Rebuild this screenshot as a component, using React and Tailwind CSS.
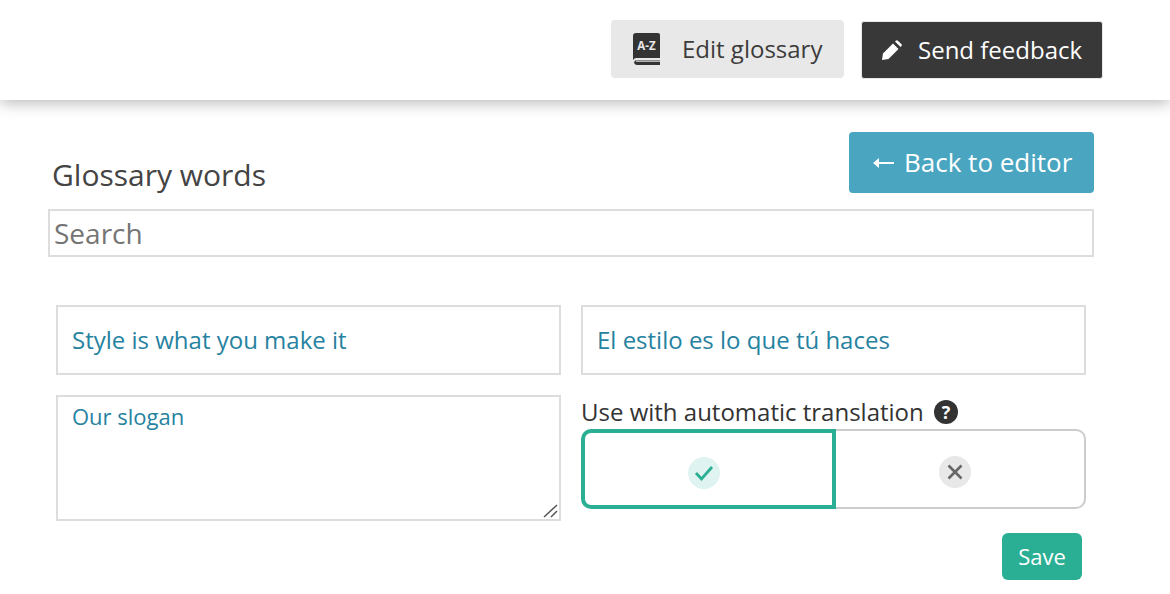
const BookIcon = () => (
  <svg width="27" height="32" viewBox="0 0 27 32">
    <path d="M3 0h22a2 2 0 0 1 2 2v23H4a4 4 0 0 0-4 2V3a3 3 0 0 1 3-3z" fill="#333" />
    <path d="M4 27h23v5H4a3 3 0 0 1-3-2.500A3 3 0 0 1 4 27z" fill="#333" />
    <rect x="3" y="27.500" width="24" height="1.200" fill="#e8e8e8" />
    <text x="13.500" y="17" textAnchor="middle" fontSize="11.500" fontWeight="700" fill="#e8e8e8" fontFamily="Open Sans, sans-serif">A-Z</text>
  </svg>
);

const PencilIcon = () => (
  <svg width="20" height="20" viewBox="0 0 20 20" fill="#fff">
    <path d="M11 3.500l5.500 5.500L6.500 19 0 20l1-6.500z" />
    <path d="M13 1.500l.8-.8a1.500 1.500 0 0 1 2.100 0l3.400 3.400a1.500 1.500 0 0 1 0 2.100l-.8.8z" />
  </svg>
);

const Field = ({ value }) => (
  <input
    defaultValue={value}
    className="h-[70px] w-[505px] border-2 border-[#ddd] bg-white px-[14px] pb-[2px] text-[24px] text-[#26829f] outline-none"
  />
);

export default function App() {
  return (
    <div className="h-[594px] overflow-hidden bg-white font-['Open_Sans',sans-serif]">
      <header className="flex h-[100px] items-start justify-end gap-[17px] pt-[20px] pr-[67px] shadow-[0_3px_14px_rgba(0,0,0,0.28)]">
        <button className="flex h-[58px] w-[233px] items-center rounded-[4px] bg-[#e8e8e8] pl-[22px] text-[24px] text-[#3c3c3c]">
          <BookIcon />
          <span className="ml-[22px]">Edit glossary</span>
        </button>
        <button className="mt-px flex h-[58px] w-[242px] items-center rounded-[3px] border border-[#e8e8e8] bg-[#383838] pl-[20px] text-[24px] text-white">
          <PencilIcon />
          <span className="ml-[16px]">Send feedback</span>
        </button>
      </header>

      <main className="pl-[48px]">
        <div className="mt-[32px] flex w-[1046px] items-end justify-between">
          <h2 className="mb-[-2px] pl-[4px] text-[30px] leading-[40px] font-normal text-[#444]">Glossary words</h2>
          <button className="flex h-[61px] w-[245px] items-center rounded-[4px] bg-[#49a5c0] pl-[24px] text-[26px] text-white">
            <svg width="21" height="12" viewBox="0 0 21 12" fill="#fff" className="mr-[10px]">
              <path d="M0 6l6-5v4h15v2H6v4z" />
            </svg>
            Back to editor
          </button>
        </div>
        <input
          placeholder="Search"
          className="mt-[16px] block h-[48px] w-[1046px] border-2 border-[#ddd] px-[4px] text-[28px] text-[#444] outline-none placeholder:text-[#757575]"
        />

        <div className="mt-[48px] ml-[8px] flex gap-[20px]">
          <div className="flex w-[505px] flex-col gap-[20px]">
            <Field value="Style is what you make it" />
            <div className="relative h-[126px] w-[505px]">
              <textarea
                defaultValue="Our slogan"
                className="block h-full w-full resize-none border-2 border-[#ddd] px-[14px] py-[3px] text-[22px] text-[#26829f] outline-none"
              />
              <svg width="15" height="15" viewBox="0 0 15 15" stroke="#555" strokeWidth="1.500" className="absolute right-[3px] bottom-[3px]">
                <path d="M1 14L14 2M8 14l6-6" />
              </svg>
            </div>
          </div>
          <div className="w-[505px]">
            <Field value="El estilo es lo que tú haces" />
            <div className="mt-[20px] flex h-[34px] items-center text-[24px] leading-[34px] text-[#333]">
              Use with automatic translation
              <svg width="24" height="24" viewBox="0 0 24 24" className="ml-[10px]">
                <circle cx="12" cy="12" r="12" fill="#333" />
                <text x="12" y="18.500" textAnchor="middle" fontSize="18" fontWeight="700" fill="#fff" fontFamily="Open Sans, sans-serif">?</text>
              </svg>
            </div>
            <div className="flex h-[80px]">
              <div className="flex w-[255px] items-center justify-center rounded-l-[10px] border-4 border-[#2aaf95] pt-[8px] pr-[10px]">
                <span className="flex size-[32px] items-center justify-center rounded-full bg-[#dff4f0]">
                  <svg width="20" height="17" viewBox="0 0 20 17" fill="none" stroke="#2aaf95" strokeWidth="2.800">
                    <path d="M2 8l5.500 6L18 2" />
                  </svg>
                </span>
              </div>
              <div className="flex w-[250px] items-center justify-center rounded-r-[10px] border-2 border-l-0 border-[#ccc] pt-[6px] pr-[10px]">
                <span className="flex size-[32px] items-center justify-center rounded-full bg-[#e8e8e8]">
                  <svg width="16" height="16" viewBox="0 0 16 16" fill="none" stroke="#666" strokeWidth="2.600">
                    <path d="M1.500 1.500l13 13M14.500 1.500l-13 13" />
                  </svg>
                </span>
              </div>
            </div>
            <div className="mt-[24px] flex justify-end pr-[4px]">
              <button className="h-[47px] w-[80px] rounded-[6px] bg-[#2aaf95] text-[22px] text-white">Save</button>
            </div>
          </div>
        </div>
      </main>
    </div>
  );
}
